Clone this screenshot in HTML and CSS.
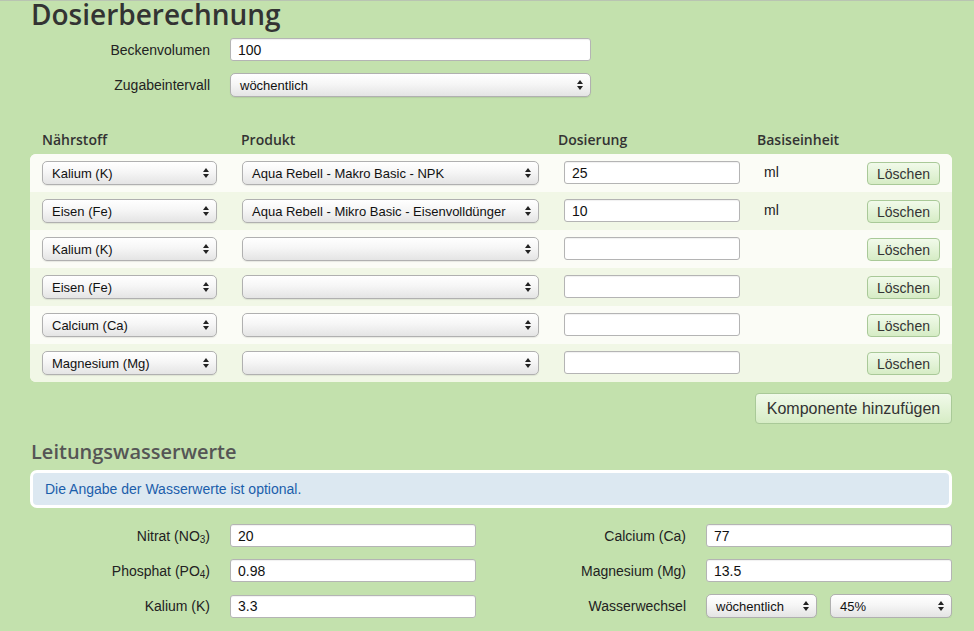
FILE: index.html
```html
<!DOCTYPE html>
<html lang="de">
<head>
<meta charset="utf-8">
<title>Dosierberechnung</title>
<link rel="stylesheet" href="styles.css">
</head>
<body>
<div class="page">
  <h1 class="title">Dosierberechnung</h1>

  <div class="form-top">
    <label class="lbl">Beckenvolumen</label>
    <input class="inp w-top" type="text" value="100">
    <label class="lbl">Zugabeintervall</label>
    <div class="select w-top"><span>wöchentlich</span><svg class="arr" width="6" height="10" viewBox="0 0 6 10"><path d="M3 0L6 4H0z M3 10L0 6h6z" fill="#222"/></svg></div>
  </div>

  <div class="thead">
    <div>Nährstoff</div>
    <div>Produkt</div>
    <div>Dosierung</div>
    <div>Basiseinheit</div>
  </div>

  <div class="card">
    <div class="row">
      <div class="select"><span>Kalium (K)</span><svg class="arr" width="6" height="10" viewBox="0 0 6 10"><path d="M3 0L6 4H0z M3 10L0 6h6z" fill="#222"/></svg></div>
      <div class="select w-prod"><span>Aqua Rebell - Makro Basic - NPK</span><svg class="arr" width="6" height="10" viewBox="0 0 6 10"><path d="M3 0L6 4H0z M3 10L0 6h6z" fill="#222"/></svg></div>
      <input class="inp w-dos" type="text" value="25">
      <div class="unit">ml</div>
      <button class="btn-del">Löschen</button>
    </div>
    <div class="row alt">
      <div class="select"><span>Eisen (Fe)</span><svg class="arr" width="6" height="10" viewBox="0 0 6 10"><path d="M3 0L6 4H0z M3 10L0 6h6z" fill="#222"/></svg></div>
      <div class="select w-prod"><span>Aqua Rebell - Mikro Basic - Eisenvolldünger</span><svg class="arr" width="6" height="10" viewBox="0 0 6 10"><path d="M3 0L6 4H0z M3 10L0 6h6z" fill="#222"/></svg></div>
      <input class="inp w-dos" type="text" value="10">
      <div class="unit">ml</div>
      <button class="btn-del">Löschen</button>
    </div>
    <div class="row">
      <div class="select"><span>Kalium (K)</span><svg class="arr" width="6" height="10" viewBox="0 0 6 10"><path d="M3 0L6 4H0z M3 10L0 6h6z" fill="#222"/></svg></div>
      <div class="select w-prod"><span></span><svg class="arr" width="6" height="10" viewBox="0 0 6 10"><path d="M3 0L6 4H0z M3 10L0 6h6z" fill="#222"/></svg></div>
      <input class="inp w-dos" type="text" value="">
      <div class="unit"></div>
      <button class="btn-del">Löschen</button>
    </div>
    <div class="row alt">
      <div class="select"><span>Eisen (Fe)</span><svg class="arr" width="6" height="10" viewBox="0 0 6 10"><path d="M3 0L6 4H0z M3 10L0 6h6z" fill="#222"/></svg></div>
      <div class="select w-prod"><span></span><svg class="arr" width="6" height="10" viewBox="0 0 6 10"><path d="M3 0L6 4H0z M3 10L0 6h6z" fill="#222"/></svg></div>
      <input class="inp w-dos" type="text" value="">
      <div class="unit"></div>
      <button class="btn-del">Löschen</button>
    </div>
    <div class="row">
      <div class="select"><span>Calcium (Ca)</span><svg class="arr" width="6" height="10" viewBox="0 0 6 10"><path d="M3 0L6 4H0z M3 10L0 6h6z" fill="#222"/></svg></div>
      <div class="select w-prod"><span></span><svg class="arr" width="6" height="10" viewBox="0 0 6 10"><path d="M3 0L6 4H0z M3 10L0 6h6z" fill="#222"/></svg></div>
      <input class="inp w-dos" type="text" value="">
      <div class="unit"></div>
      <button class="btn-del">Löschen</button>
    </div>
    <div class="row alt">
      <div class="select"><span>Magnesium (Mg)</span><svg class="arr" width="6" height="10" viewBox="0 0 6 10"><path d="M3 0L6 4H0z M3 10L0 6h6z" fill="#222"/></svg></div>
      <div class="select w-prod"><span></span><svg class="arr" width="6" height="10" viewBox="0 0 6 10"><path d="M3 0L6 4H0z M3 10L0 6h6z" fill="#222"/></svg></div>
      <input class="inp w-dos" type="text" value="">
      <div class="unit"></div>
      <button class="btn-del">Löschen</button>
    </div>
  </div>

  <div class="add-row">
    <button class="btn-add">Komponente hinzufügen</button>
  </div>

  <h3 class="subtitle">Leitungswasserwerte</h3>
  <div class="info">Die Angabe der Wasserwerte ist optional.</div>

  <div class="water">
    <div class="wcol">
      <label class="lbl">Nitrat (NO<sub>3</sub>)</label>
      <input class="inp" type="text" value="20">
      <label class="lbl">Phosphat (PO<sub>4</sub>)</label>
      <input class="inp" type="text" value="0.98">
      <label class="lbl">Kalium (K)</label>
      <input class="inp" type="text" value="3.3">
    </div>
    <div class="wcol">
      <label class="lbl">Calcium (Ca)</label>
      <input class="inp" type="text" value="77">
      <label class="lbl">Magnesium (Mg)</label>
      <input class="inp" type="text" value="13.5">
      <label class="lbl">Wasserwechsel</label>
      <div class="pair">
        <div class="select w-ww"><span>wöchentlich</span><svg class="arr" width="6" height="10" viewBox="0 0 6 10"><path d="M3 0L6 4H0z M3 10L0 6h6z" fill="#222"/></svg></div>
        <div class="select w-pct"><span>45%</span><svg class="arr" width="6" height="10" viewBox="0 0 6 10"><path d="M3 0L6 4H0z M3 10L0 6h6z" fill="#222"/></svg></div>
      </div>
    </div>
  </div>
</div>
</body>
</html>
```

FILE: styles.css
```css
html, body {
  margin: 0;
  padding: 0;
}
body {
  background: #c3e1ad;
  font-family: "Liberation Sans", Arial, sans-serif;
  font-size: 14px;
  color: #222;
  box-shadow: inset 0 1px 0 #b9c4b2;
}
.page {
  width: 922px;
  padding-left: 30px;
}
.title {
  margin: 0 0 0 1px;
  font-family: "Open Sans", sans-serif;
  font-weight: 600;
  font-size: 28px;
  line-height: 28px;
  color: #333;
}
.form-top {
  display: grid;
  grid-template-columns: 180px 361px;
  column-gap: 20px;
  row-gap: 12px;
  align-items: center;
  margin-top: 10px;
}
.lbl {
  text-align: right;
  font-size: 14px;
  color: #222;
}
.lbl sub {
  font-size: 10px;
  vertical-align: -2px;
  line-height: 0;
}
.inp {
  box-sizing: border-box;
  height: 23px;
  margin: 0;
  border: 1px solid #b4b4b4;
  border-radius: 3px;
  background: #fff;
  padding: 0 7px;
  font-family: "Liberation Sans", Arial, sans-serif;
  font-size: 14px;
  color: #111;
  box-shadow: inset 0 1px 1px rgba(0,0,0,0.06);
  outline: none;
  width: 100%;
}
.select {
  box-sizing: border-box;
  height: 24px;
  width: 175px;
  border: 1px solid #b0b0b0;
  border-radius: 5px;
  background: linear-gradient(#ffffff 0%, #f6f6f6 45%, #e4e4e4 100%);
  box-shadow: 0 1px 1px rgba(0,0,0,0.08);
  display: flex;
  align-items: center;
  justify-content: space-between;
  padding: 0 7px 0 9px;
  font-size: 13px;
  color: #111;
}
.select .arr {
  flex: none;
}
.w-top { width: 361px; }
.w-prod { width: 297px; }
.w-dos { width: 176px; }
.w-ww { width: 111px; }
.w-pct { width: 122px; }

.thead {
  display: grid;
  grid-template-columns: 199px 317px 199px 150px;
  padding-left: 12px;
  margin-top: 30px;
  height: 24px;
  align-items: center;
  font-family: "Open Sans", sans-serif;
  font-weight: 600;
  font-size: 14px;
  color: #333;
}
.card {
  margin-top: 3px;
  border-radius: 6px;
  overflow: hidden;
  background: #fbfcf6;
}
.row {
  display: grid;
  grid-template-columns: 200px 322px 200px 103px 73px;
  height: 38px;
  box-sizing: border-box;
  padding: 7px 12px 0 12px;
  align-items: start;
  background: #fbfcf6;
}
.row.alt {
  background: #f1f7e6;
}
.row .inp {
  width: 176px;
}
.unit {
  padding-top: 1px;
  line-height: 20px;
  font-size: 14px;
  color: #222;
}
.btn-del {
  box-sizing: border-box;
  width: 73px;
  height: 23px;
  margin-top: 1px;
  border: 1px solid #a9c998;
  border-radius: 4px;
  background: linear-gradient(#f1faea, #d6ecc5);
  font-family: "Liberation Sans", Arial, sans-serif;
  font-size: 14px;
  color: #333;
  padding: 0;
}
.add-row {
  display: flex;
  justify-content: flex-end;
  margin-top: 11px;
}
.btn-add {
  box-sizing: border-box;
  width: 197px;
  height: 31px;
  border: 1px solid #a9c998;
  border-radius: 4px;
  background: linear-gradient(#f1faea, #d6ecc5);
  font-family: "Liberation Sans", Arial, sans-serif;
  font-size: 16px;
  color: #333;
  padding: 0;
}
.subtitle {
  margin: 14px 0 0 1px;
  font-family: "Open Sans", sans-serif;
  font-weight: 600;
  font-size: 20px;
  line-height: 28px;
  color: #555;
}
.info {
  box-sizing: border-box;
  margin-top: 4px;
  height: 38px;
  border: 3px solid #fff;
  border-radius: 7px;
  background: #dce8f1;
  padding: 0 12px;
  display: flex;
  align-items: center;
  font-size: 14px;
  color: #1b5eab;
}
.water {
  display: grid;
  grid-template-columns: 446px 446px;
  column-gap: 30px;
  margin-top: 16px;
}
.wcol {
  display: grid;
  grid-template-columns: 180px 246px;
  column-gap: 20px;
  row-gap: 12px;
  align-items: center;
}
.pair {
  display: flex;
  justify-content: space-between;
}
.pair .select {
  height: 24px;
}
```
